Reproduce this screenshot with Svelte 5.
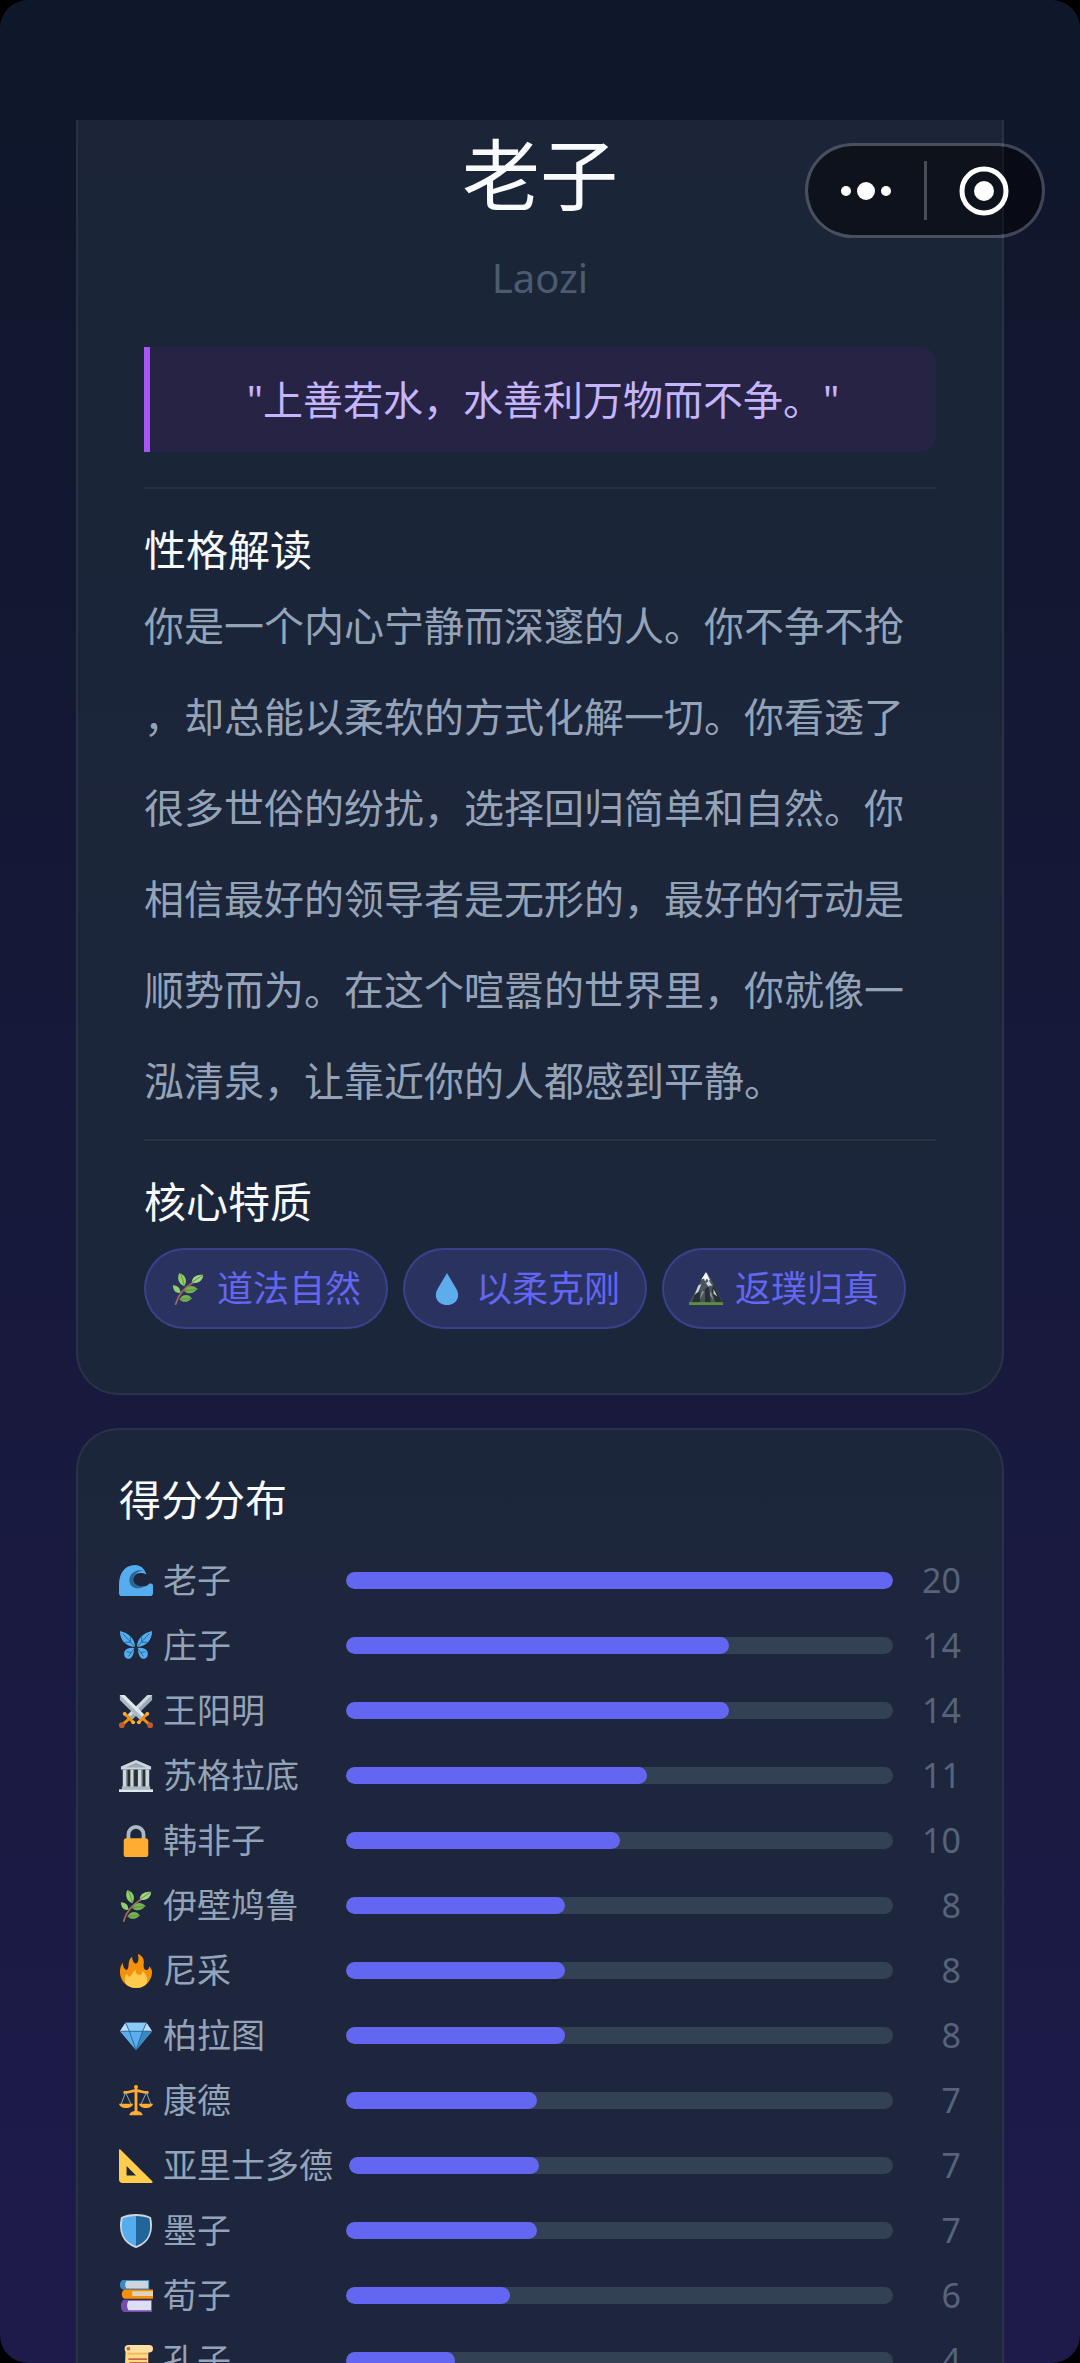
<script lang="ts">
    interface Trait {
        icon: string;
        text: string;
    }

    interface Score {
        icon: string;
        name: string;
        value: number;
    }

    const name = "老子";
    const nameEn = "Laozi";
    const quote = "\"上善若水，水善利万物而不争。\"";

    // 标点允许出现在行首，所以按行拆分
    const description = [
        "你是一个内心宁静而深邃的人。你不争不抢",
        "，却总能以柔软的方式化解一切。你看透了",
        "很多世俗的纷扰，选择回归简单和自然。你",
        "相信最好的领导者是无形的，最好的行动是",
        "顺势而为。在这个喧嚣的世界里，你就像一",
        "泓清泉，让靠近你的人都感到平静。"
    ];

    const traits: Array<Trait> = [
        { icon: "herb", text: "道法自然" },
        { icon: "drop", text: "以柔克刚" },
        { icon: "mountain", text: "返璞归真" }
    ];

    const scores: Array<Score> = [
        { icon: "wave", name: "老子", value: 20 },
        { icon: "butterfly", name: "庄子", value: 14 },
        { icon: "swords", name: "王阳明", value: 14 },
        { icon: "temple", name: "苏格拉底", value: 11 },
        { icon: "lock", name: "韩非子", value: 10 },
        { icon: "herb", name: "伊壁鸠鲁", value: 8 },
        { icon: "fire", name: "尼采", value: 8 },
        { icon: "gem", name: "柏拉图", value: 8 },
        { icon: "scales", name: "康德", value: 7 },
        { icon: "ruler", name: "亚里士多德", value: 7 },
        { icon: "shield", name: "墨子", value: 7 },
        { icon: "books", name: "荀子", value: 6 },
        { icon: "scroll", name: "孔子", value: 4 }
    ];

    const maxScore = Math.max(...scores.map((item) => item.value));
</script>

{#snippet icon(type: string)}
    <svg class="icon" viewBox="0 0 36 36" aria-hidden="true">
        {#if type === "herb"}
            <path d="M5 34C7 25 13 17 25 10" fill="none" stroke="#a0675a" stroke-width="2" stroke-linecap="round" />
            <path d="M14 15C8 13 6 6 9 1c6 2 9 8 5 14z" fill="#8fd06a" />
            <path d="M22 11c0-6 6-9 12-8 0 6-5 10-12 8z" fill="#a6d388" />
            <path d="M10 22c-5 1-8-3-8-8 5 0 8 3 8 8z" fill="#8fd06a" />
            <path d="M14 20c3-6 10-7 14-2-4 5-10 6-14 2z" fill="#77b255" />
            <path d="M9 29c3-6 10-6 13-1-4 4-9 5-13 1z" fill="#77b255" />
            <path d="M14 15C13 10 12 5 9 1M22 11l12-8M14 20l14-2M9 29l13-1" fill="none" stroke="#5c913b" stroke-width="1" />
        {:else if type === "drop"}
            <path d="M18 1l10 17c5 9-1 17-10 17S3 27 8 18z" fill="#5dadec" />
        {:else if type === "mountain"}
            <path d="M0 33L6 22l5-10 6-11h3l5 10 5 9 6 13z" fill="#4b545d" />
            <path d="M3 32l5-12 3-3 1 15zM26 13l9 19h-7l-4-12zM17 18l4-3 2 17h-6z" fill="#292f33" />
            <path d="M18 0l-5 8 3-1 1 3 2-3 2 3 1-2z" fill="#f5f8fa" />
            <path d="M18 12l3-3 4 6-3-1-1 2zM10 14l-4 10 4-3 3-8zM26 18l4 8-4-3z" fill="#ccd6dd" />
            <path d="M14 20l-3 9 5-8zM23 20l3 10-4-6z" fill="#8899a6" />
            <path d="M0 32h36v3H0z" fill="#5c913b" />
        {:else if type === "wave"}
            <path d="M29 11C21 7 14 11 15 18c1 7 13 8 17 3 2-1 4 0 4 2v8a3 3 0 0 1-3 3H3a3 3 0 0 1-3-3v-9C0 10 6 1 17 1c6 0 10 4 12 10z" fill="#55acee" />
            <path d="M26 7c-8-2-15 3-15 10 0 8 8 11 15 7-6 0-11-3-11-8 0-4 4-8 11-9z" fill="#2a6797" />
        {:else if type === "butterfly"}
            <path d="M17 19C7 18 1 12 1 2c9 2 16 8 16 17zM19 19C29 18 35 12 35 2c-9 2-16 8-16 17z" fill="#55acee" />
            <path d="M16 20C8 19 4 23 6 29c3 5 10 3 10-9zM20 20c8-1 12 3 10 9-3 5-10 3-10-9z" fill="#55acee" />
            <path d="M17 19L4 5M12 14H6M12 14V8M19 19L32 5M24 14h6M24 14V8M16 21l-6 8M20 21l6 8M13 25l-5-1M23 25l5-1" fill="none" stroke="#226699" stroke-width="1" />
            <path d="M18 17v13" stroke="#292f33" stroke-width="2" stroke-linecap="round" />
        {:else if type === "swords"}
            <path d="M35 1h-5L9 22l5 5L35 6z" fill="#ccd6dd" />
            <path d="M35 1L11 25l3 2L35 6z" fill="#99aab5" />
            <path d="M6 21l9 9M11 26l-8 7" stroke="#f4900c" stroke-width="3" stroke-linecap="round" />
            <path d="M1 1h5l21 21-5 5L1 6z" fill="#e1e8ed" />
            <path d="M1 1l24 24-3 2L1 6z" fill="#aab8c2" />
            <path d="M30 21l-9 9M25 26l8 7" stroke="#f4900c" stroke-width="3" stroke-linecap="round" />
            <circle cx="3" cy="33" r="3" fill="#be5a2b" />
            <circle cx="33" cy="33" r="3" fill="#be5a2b" />
            <circle cx="6" cy="21" r="2" fill="#ffac33" />
            <circle cx="15" cy="30" r="2" fill="#ffac33" />
            <circle cx="30" cy="21" r="2" fill="#ffac33" />
            <circle cx="21" cy="30" r="2" fill="#ffac33" />
        {:else if type === "temple"}
            <path d="M4 11h28v19H4z" fill="#292f33" />
            <path d="M4 11h4v19H4zM12 11h3v19h-3zM20 11h4v19h-4zM28 11h4v19h-4z" fill="#ccd6dd" />
            <path d="M8 11h1v19H8zM15 11h1v19h-1zM24 11h1v19h-1z" fill="#8899a6" />
            <path d="M2 8L18 1l16 7v3H2z" fill="#ccd6dd" />
            <path d="M7 9l11-5 11 5z" fill="#99aab5" />
            <path d="M3 29h30v3H3z" fill="#aab8c2" />
            <path d="M0 32h36v3H0z" fill="#e1e8ed" />
        {:else if type === "lock"}
            <path d="M10 18v-7a8 8 0 0 1 16 0v7" fill="none" stroke="#aab8c2" stroke-width="4" />
            <rect x="5" y="15" width="26" height="20" rx="3" fill="#ffac33" />
        {:else if type === "fire"}
            <path d="M35 19c0 9-7 17-17 17S1 28 1 19c0-4 1-7 3-10 0 3 1 7 4 8 4-2 0-10 6-14 0 3 1 7 4 7 3-1 3-5 2-10 6 2 7 7 6 12 0 3 1 5 3 5s3-2 3-4c2 2 3 4 3 6z" fill="#f4900c" />
            <path d="M30 27c0 6-5 9-12 9S6 32 6 27c0-3 1-5 3-6 0 2 1 3 2 3 3 0 2-5 7-7-1 4 2 5 4 5 3 0 2-3 3-4 3 3 5 6 5 9z" fill="#ffcc4d" />
        {:else if type === "gem"}
            <path d="M7 4h22l6 9-17 20L1 13z" fill="#5dadec" />
            <path d="M7 4h22l6 9H1z" fill="#8ccaf7" />
            <path d="M7 4l4 9H1zM29 4l6 9H25z" fill="#bdddf4" />
            <path d="M25 13h10L18 33z" fill="#3b88c3" />
            <path d="M1 13h34M7 4l4 9 7 20 7-20 4-9" fill="none" stroke="#226699" stroke-width="1" />
        {:else if type === "scales"}
            <path d="M18 3v28M6 9c6 0 7-2 12-2s6 2 12 2" fill="none" stroke="#ffac33" stroke-width="3" stroke-linecap="round" />
            <path d="M7 9L2 22M7 9l6 13M29 9l-6 13M29 9l5 13" stroke="#99aab5" stroke-width="1" />
            <path d="M0 21h15c-1 6-14 6-15 0zM21 21h15c-1 6-14 6-15 0z" fill="#ffac33" />
            <path d="M11 33c0-6 14-6 14 0z" fill="#ffac33" />
            <circle cx="18" cy="3" r="2" fill="#ffac33" />
        {:else if type === "ruler"}
            <path d="M0 2c0-2 1-2 2-1l33 33c1 1 1 2-1 2H4a4 4 0 0 1-4-4zM8 18v10h10z" fill="#ffcc4d" fill-rule="evenodd" />
        {:else if type === "shield"}
            <path d="M18 1c6 0 11 1 15 3 3 14-1 26-15 31C4 30 0 18 3 4c4-2 9-3 15-3z" fill="#55acee" />
            <path d="M18 1c6 0 11 1 15 3 3 14-1 26-15 31z" fill="#226699" />
            <path d="M18 1c6 0 11 1 15 3 3 14-1 26-15 31C4 30 0 18 3 4c4-2 9-3 15-3z" fill="none" stroke="#ccd6dd" stroke-width="2" />
        {:else if type === "books"}
            <path d="M4 1h28v10H4C0 10 0 2 4 1z" fill="#3b88c3" />
            <path d="M8 2h23v8H8C6 8 6 4 8 2z" fill="#ccd6dd" />
            <path d="M6 11h30v10H6c-4-1-4-9 0-10z" fill="#f4900c" />
            <path d="M14 13h22v5H14z" fill="#e1d4bf" />
            <path d="M5 22h30v13H5c-4-2-4-11 0-13z" fill="#744eaa" />
            <path d="M10 23h24v10H10c-2-3-2-7 0-10z" fill="#dcdff0" />
        {:else if type === "scroll"}
            <path d="M7 5h24v31H6z" fill="#ffd983" />
            <path d="M9 9h22v2H9z" fill="#e9b55e" />
            <path d="M10 15h20v2H10zM11 19h19v2H11z" fill="#c1694f" />
            <path d="M10 1h22a4 4 0 0 1 0 8H10a4 4 0 0 1 0-8z" fill="#ffe0a0" />
            <circle cx="10" cy="5" r="2" fill="#c1694f" />
        {/if}
    </svg>
{/snippet}

<div class="page">
    <main>
        <section class="card profile">
            <h1>{name}</h1>
            <p class="name-en">{nameEn}</p>
            <blockquote>{quote}</blockquote>

            <div class="block">
                <h2>性格解读</h2>
                <p class="description">
                    {#each description as line}
                        <span>{line}</span>
                    {/each}
                </p>
            </div>

            <div class="block">
                <h2>核心特质</h2>
                <ul class="traits">
                    {#each traits as item}
                        <li>{@render icon(item.icon)}{item.text}</li>
                    {/each}
                </ul>
            </div>
        </section>

        <section class="card scores">
            <h2>得分分布</h2>
            <ul>
                {#each scores as item}
                    <li>
                        <span class="label">{@render icon(item.icon)}{item.name}</span>
                        <div class="track">
                            <div class="fill" style="width: {(item.value / maxScore) * 100}%"></div>
                        </div>
                        <span class="value">{item.value}</span>
                    </li>
                {/each}
            </ul>
        </section>
    </main>

    <div class="capsule">
        <button aria-label="更多">
            <svg width="52" height="52" viewBox="0 0 52 52">
                <circle cx="6" cy="26" r="5" />
                <circle cx="26" cy="26" r="9" />
                <circle cx="46" cy="26" r="5" />
            </svg>
        </button>
        <span class="separator"></span>
        <button aria-label="关闭">
            <svg width="52" height="52" viewBox="0 0 52 52">
                <circle class="ring" cx="26" cy="26" r="22" />
                <circle cx="26" cy="26" r="10" />
            </svg>
        </button>
    </div>
</div>

<style>
    :global(body) {
        background-color: #000;
    }

    .page {
        position: relative;
        box-sizing: border-box;
        height: 100vh;
        padding: 120px 76px 0;
        overflow: hidden;
        border-radius: 28px;
        background: linear-gradient(180deg, #0f172a, #1e1b4b);
        font-family: "Noto Sans", "Noto Sans CJK SC", sans-serif;
        color: #f8fafc;
    }

    h1, h2, p, ul, blockquote {
        margin: 0;
        padding: 0;
        font-weight: 400;
        list-style: none;
    }

    h2 {
        font-size: 42px;
        line-height: 60px;
    }

    .card {
        border: 2px solid rgba(255, 255, 255, 0.06);
        border-radius: 42px;
        background-color: rgba(30, 41, 59, 0.8);
    }

    /* 顶部已滚出可视区域 */
    .profile {
        border-top: none;
        border-radius: 0 0 42px 42px;
        padding: 0 66px 64px;
        margin-bottom: 33px;
    }

    h1 {
        font-size: 78px;
        line-height: 110px;
        text-align: center;
    }

    .name-en {
        margin: 20px 0 41px;
        font-size: 40px;
        line-height: 56px;
        text-align: center;
        color: #4d5b70;
    }

    blockquote {
        margin-bottom: 35px;
        padding: 24px 32px;
        border-left: 6px solid #a855f7;
        border-radius: 0 16px 16px 0;
        background-color: rgba(88, 28, 120, 0.2);
        font-size: 40px;
        line-height: 57px;
        text-align: center;
        color: #c4b5fd;
    }

    .block {
        border-top: 2px solid rgba(255, 255, 255, 0.06);
        padding-top: 31px;
    }

    .description {
        padding-bottom: 13px;
        font-size: 40px;
        line-height: 91px;
        color: #94a3b8;
    }

    .description span {
        display: block;
        white-space: nowrap;
    }

    .traits {
        display: flex;
        flex-wrap: wrap;
        gap: 15px;
        margin-top: 16px;
    }

    .traits li {
        display: flex;
        align-items: center;
        gap: 12px;
        padding: 13px 25px;
        border: 2px solid rgba(99, 102, 241, 0.3);
        border-radius: 42px;
        background-color: rgba(99, 102, 241, 0.2);
        font-size: 36px;
        line-height: 51px;
        color: #6366f1;
    }

    .icon {
        flex: none;
        width: 34px;
        height: 34px;
    }

    .scores {
        padding: 40px 41px;
    }

    .scores ul {
        display: flex;
        flex-direction: column;
        gap: 16px;
        margin-top: 26px;
    }

    .scores li {
        display: flex;
        align-items: center;
        gap: 16px;
        font-size: 34px;
        line-height: 49px;
    }

    .label {
        display: flex;
        align-items: center;
        gap: 10px;
        min-width: 211px;
        color: #94a3b8;
    }

    .track {
        flex: 1;
        height: 17px;
        overflow: hidden;
        border-radius: 9px;
        background-color: #334155;
    }

    .fill {
        height: 100%;
        border-radius: 9px;
        background-color: #6366f1;
    }

    .value {
        width: 52px;
        text-align: right;
        color: #56637b;
    }

    .capsule {
        position: absolute;
        top: 143px;
        right: 35px;
        box-sizing: border-box;
        display: flex;
        align-items: center;
        width: 240px;
        height: 95px;
        border: 3px solid rgba(255, 255, 255, 0.2);
        border-radius: 48px;
        background-color: rgba(0, 0, 0, 0.5);
        background-clip: padding-box;
    }

    .capsule button {
        display: flex;
        flex: 1;
        align-items: center;
        justify-content: center;
        padding: 0;
        border: none;
        background: none;
        cursor: pointer;
    }

    .capsule circle {
        fill: #fff;
    }

    .capsule .ring {
        fill: none;
        stroke: #fff;
        stroke-width: 5;
    }

    .separator {
        width: 3px;
        height: 59px;
        background-color: rgba(255, 255, 255, 0.25);
    }
</style>
